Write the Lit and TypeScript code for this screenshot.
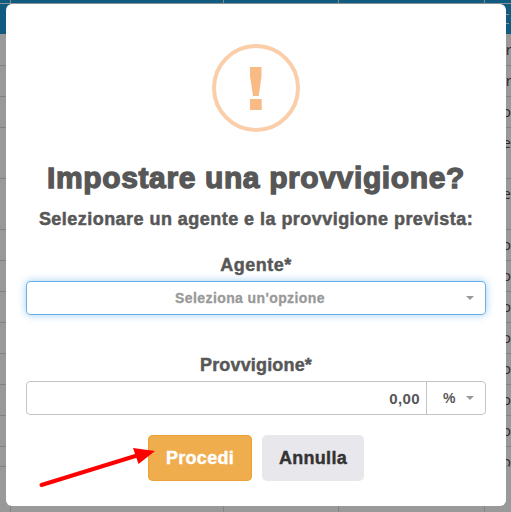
import { LitElement, html, css, svg } from "lit";
import { customElement } from "lit/decorators.js";
import { styleMap } from "lit/directives/style-map.js";

const rows: Array<[number, string]> = [
  [31, "ar"], [31, "ar"], [31, "o"], [51, "e"], [51, "e"], [31, "o"], [31, "o"],
  [31, "o"], [31, "o"], [31, "o"], [31, "o"], [31, "o"], [20, "o"],
];

@customElement("data-table")
class DataTable extends LitElement {
  static styles = css`
    :host { display: block; height: 512px; overflow: hidden; background: #999; font: 15px/29px "Open Sans", sans-serif; color: #2b2b2b; }
    .row { display: grid; grid-template-columns: 11px 213px 115px 146px 1fr; box-sizing: border-box; overflow: hidden; border-bottom: 1px solid #838383; }
    .cell { border-right: 1px solid #858585; }
    .top { height: 4px; background: #0f5c80; border-bottom: 1px solid #8b9499; }
    .head { height: 31px; background: #0f5c80; border-bottom-color: #999; }
    .last { text-align: right; white-space: nowrap; }
    .wide { margin-right: -1px; }
    .mark { width: 3px; height: 10px; box-sizing: border-box; border: solid #8b9499; border-width: 1px 0; margin: 10px 0 0 21px; }
    .foot { height: 45px; border: 0; }
  `;
  render() {
    const lines = [0, 1, 2, 3].map(() => html`<div class="cell"></div>`);
    return html`
      <div class="row top">${lines}<div></div></div>
      <div class="row head">${lines}<div><div class="mark"></div></div></div>
      ${rows.map(([h, t]) => html`<div class="row" style=${styleMap({ height: h + "px" })}>${lines}<div class="last ${t === "ar" ? "wide" : ""}">${t}</div></div>`)}
      <div class="row foot">${lines}<div></div></div>`;
  }
}

@customElement("app-root")
class AppRoot extends LitElement {
  static styles = css`
    :host { display: block; position: relative; width: 511px; height: 512px; overflow: hidden; font-family: "Liberation Sans", Arial, sans-serif; font-weight: 700; color: #575757; }
    .modal { position: absolute; left: 6px; top: 4px; width: 500px; height: 502px; box-sizing: border-box; padding: 40px 20px 0; border-radius: 6px; background: #fff; display: flex; flex-direction: column; align-items: center; white-space: nowrap; }
    .warn { display: block; width: 88px; height: 88px; flex: none; }
    h2 { margin: 26px 0 0; font-size: 30px; line-height: 40px; letter-spacing: .62px; -webkit-text-stroke: 1.3px; }
    p { margin: 10px 0 0; font-size: 18px; line-height: 22px; letter-spacing: .46px; -webkit-text-stroke: .5px; }
    label { font-size: 18px; line-height: 22px; letter-spacing: .5px; margin-top: 24px; -webkit-text-stroke: .45px; }
    .field { width: 460px; height: 34px; box-sizing: border-box; margin-top: 5px; border: 1px solid #c4c4c4; border-radius: 4px; display: flex; align-items: center; font-size: 14px; flex: none; }
    .focus { border-color: #66afe9; box-shadow: 0 0 8px rgba(102, 175, 233, .6); color: #999; }
    .choice { flex: 1; text-align: center; padding-left: 7px; letter-spacing: .4px; -webkit-text-stroke: .3px; }
    .caret { width: 8px; height: 4px; margin-right: 11px; background: #999; clip-path: polygon(0 0, 100% 0, 50% 100%); }
    .second { margin-top: 39px; letter-spacing: .17px; }
    .amount { flex: 1; text-align: right; padding-right: 6px; font-size: 15px; letter-spacing: .4px; }
    .unit { width: 59px; height: 32px; box-sizing: border-box; border-left: 1px solid #c4c4c4; display: flex; align-items: center; justify-content: space-between; padding-left: 16px; }
    .actions { display: flex; gap: 10px; margin-top: 20px; }
    button { width: 102px; height: 46px; border: 0; border-radius: 5px; padding: 0; background: #e8e7ec; color: #333; font: 700 18px "Liberation Sans", sans-serif; letter-spacing: .3px; -webkit-text-stroke: .4px; }
    .ok { width: 104px; background: #f0ad4e; color: #fff; box-shadow: inset 0 0 0 1px #eea236; }
    .arrow { position: absolute; left: 36px; top: 440px; }
  `;
  render() {
    return html`
      <data-table></data-table>
      <div class="modal">
        <svg class="warn" viewBox="0 0 88 88">${svg`
          <circle cx="44" cy="44" r="42" fill="none" stroke="#facea8" stroke-width="4"/>
          <path d="M38 23H49.5V32L46.8 52H41L38 32ZM38 55H49.7V66H38Z" fill="#f8bb86"/>`}
        </svg>
        <h2>Impostare una provvigione?</h2>
        <p>Selezionare un agente e la provvigione prevista:</p>
        <label>Agente*</label>
        <div class="field focus"><span class="choice">Seleziona un'opzione</span><i class="caret"></i></div>
        <label class="second">Provvigione*</label>
        <div class="field"><span class="amount">0,00</span><span class="unit">%<i class="caret"></i></span></div>
        <div class="actions"><button class="ok">Procedi</button><button>Annulla</button></div>
      </div>
      <svg class="arrow" width="122" height="50" viewBox="36 440 122 50">
        <path d="M41.5 485L137 455.5" stroke="#f00" stroke-width="4" stroke-linecap="round"/>
        <path d="M133 448L155 451L138.5 464Z" fill="#f00"/>
      </svg>`;
  }
}
